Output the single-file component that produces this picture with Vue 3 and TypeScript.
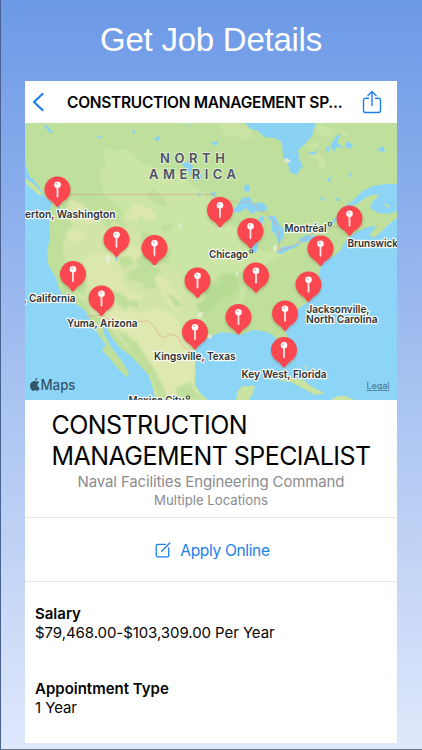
<script setup lang="ts">
interface Pin {
  x: number
  y: number
}

interface Label {
  text: string
  x: number
  y: number
  width: number
}

// map coordinates, same space as the viewBox
const pins: Pin[] = [
  { x: 57.5, y: 189.5 },
  { x: 116.5, y: 239.5 },
  { x: 154.5, y: 248 },
  { x: 250.5, y: 231 },
  { x: 220, y: 210 },
  { x: 349.5, y: 218.5 },
  { x: 320.5, y: 248.5 },
  { x: 73, y: 274 },
  { x: 101.5, y: 298.5 },
  { x: 197.5, y: 280.5 },
  { x: 256, y: 275.5 },
  { x: 308.5, y: 284.5 },
  { x: 285, y: 313.5 },
  { x: 238.5, y: 317 },
  { x: 195, y: 332 },
  { x: 284, y: 350 },
]

const labels: Label[] = [
  { text: 'erton, Washington', x: 25, y: 217.7, width: 90.5 },
  { text: ', California', x: 23.5, y: 302.2, width: 52 },
  { text: 'Yuma, Arizona', x: 67, y: 326.7, width: 70.5 },
  { text: 'Kingsville, Texas', x: 154, y: 359.7, width: 81.5 },
  { text: 'Chicago', x: 209, y: 257.8, width: 39 },
  { text: 'Montréal', x: 284.5, y: 231.8, width: 42 },
  { text: 'Brunswick', x: 347.5, y: 247.2, width: 50.5 },
  { text: 'Jacksonville,', x: 306.5, y: 313, width: 63 },
  { text: 'North Carolina', x: 306, y: 323.2, width: 71.5 },
  { text: 'Key West, Florida', x: 241.5, y: 378.2, width: 85 },
  { text: 'Mexico City', x: 128.5, y: 403.5, width: 56 },
]

const details = [
  { title: 'Salary', value: '$79,468.00-$103,309.00 Per Year' },
  { title: 'Appointment Type', value: '1 Year' },
]
</script>

<template>
  <main class="page">
    <h1 class="headline">Get Job Details</h1>

    <section class="screen">
      <header class="navbar">
        <svg class="back" viewBox="0 0 12 20">
          <path d="M10.5 2 L2 10 L10.5 18" />
        </svg>
        <span class="navbar-title">CONSTRUCTION MANAGEMENT SP...</span>
        <svg class="share" viewBox="0 0 20 24">
          <path d="M6.5 8.2H3.6Q1.5 8.2 1.5 10.3V20.4Q1.5 22.5 3.6 22.5H16.4Q18.5 22.5 18.5 20.4V10.3Q18.5 8.2 16.4 8.2H13.5" />
          <path d="M10 15.5V1.6M6 5.4L10 1.5L14 5.4" />
        </svg>
      </header>

      <svg class="map" viewBox="25 123 372 277" preserveAspectRatio="none">
        <defs>
          <filter id="soft" x="-10%" y="-10%" width="120%" height="120%">
            <feGaussianBlur stdDeviation="1" />
          </filter>
          <filter id="shade" x="-40%" y="-40%" width="180%" height="180%">
            <feGaussianBlur stdDeviation="1.5" />
          </filter>
          <clipPath id="land-clip">
            <path id="land" d="M25 123H397V184L385 184L373 186L363 191L355 198L348 207L357 204L366 197L375 194L379 196L372 202L370 208L378 213L388 214L397 211V218L388 225L380 233L373 238L369 235L377 226L368 227L359 231L350 236L345 242L341 250L334 256L325 260L321 266L319 275L314 283L315 291L307 303L300 307L292 314L287 323L286 333L290 342L294 355L292 363L286 358L282 347L277 339L270 333L263 331L253 330L247 332L240 335L232 333L222 332L213 335L203 341L197 346L195 355L196 375L195 384L200 393L208 400H156L152 385L148 374L140 366L132 357L121 349L112 338L105 325L102 323L104 334L111 347L121 360L129 373L127 377L118 369L111 360L102 350L106 345L98 334L91 321L85 310L76 304L67 301L59 289L56 278L48 264L47 252L50 238L49 215L52 203L44 196L39 187L31 181L25 163Z" />
          </clipPath>
        </defs>

        <rect x="25" y="123" width="372" height="277" fill="#8dd5f6" />
        <use href="#land" fill="#bfdf9c" />

        <g clip-path="url(#land-clip)">
          <!-- plains and prairie -->
          <g filter="url(#soft)">
            <path fill="#cbe5a5" d="M102 147L112 151L124 149L134 154L142 164L158 168L178 172L190 184L204 192L212 202L224 222L238 228L244 244L266 252L284 246L296 250L288 262L270 268L252 266L240 276L226 278L212 286L204 300L206 318L194 342L180 330L160 300L130 260L106 235L104 195L99 172L106 164Z" />
            <path fill="#c9e4a2" d="M218 124L238 123L250 129L254 136L244 141L236 135L224 137ZM317 123L336 129L330 137L316 135Z" />
            <path fill="#d0e5a6" d="M70 198L84 204L98 216L124 218L142 232L160 250L172 268L184 280L196 292L200 312L190 332L150 322L100 314L76 296L64 270L62 236L76 222L66 212Z" />
            <path fill="#dee8b0" d="M88 298L106 308L122 306L140 312L160 308L176 316L182 330L192 346L196 360L194 386L206 400H156L150 372L128 348L106 322L90 312Z" />
            <path fill="#dce7ad" d="M84 256L100 252L112 262L124 270L122 282L130 290L144 294L140 308L118 310L100 304L92 290L84 276ZM70 200L80 204L82 212L92 214L100 222L90 224L80 220L72 224L66 214ZM134 203L142 205L152 210L158 218L148 220L140 216L136 222L126 216ZM106 238L118 246L132 242L144 252L138 262L126 258L118 264L106 256ZM66 232L82 230L88 236L78 242L68 240ZM152 272L164 278L178 294L186 306L176 312L164 300Z" />
          </g>
          <!-- mountains and woodland -->
          <g filter="url(#soft)" fill="#bfdf9b">
            <path d="M86 204L104 194L114 204L124 212L120 218L130 228L122 226L114 220L108 228L100 218L90 214ZM50 205L62 204L68 214L66 232L60 252L66 264L76 272L86 286L84 296L74 288L62 274L48 258L46 230Z" />
            <path d="M140 232L150 232L158 242L172 252L168 264L158 262L160 272L154 278L156 288L148 290L142 282L130 280L126 272L140 268L136 260L146 252ZM112 290L122 294L128 300L140 302L138 308L128 306L126 312L118 304ZM118 258L130 256L134 264L122 268Z" />
            <path d="M116 330L126 334L136 342L140 348L152 366L162 384L168 398H158L150 374L140 364L130 350ZM132 340L138 342L137 352L133 350ZM176 388L190 382L196 392L206 400H178Z" />
            <path d="M212 282L224 272L238 274L248 266L262 266L276 258L296 248L304 246L300 330L246 336L216 336L202 340L206 322L200 316L208 304L206 292Z" />
            <path d="M166 292L176 298L184 306L176 308ZM160 226L170 222L174 228L164 232ZM152 188L164 198L168 206L156 204L146 196Z" />
            <path fill="#b6db93" d="M202 290L208 284L218 286L222 276L232 272L240 282L232 294L220 300L212 310L200 312L196 306L206 298Z" />
            <path fill="#cbe5a5" d="M240 286L247 284L244 300L238 306L232 304L240 296Z" />
          </g>
          <g filter="url(#soft)" fill="#cbe5a5">
            <path d="M312 151L323 156L326 167L317 168L320 160L311 158ZM300 147L319 142L316 149ZM337 128L349 133L345 137Z" />
          </g>
        </g>

        <!-- bays, lakes and rivers -->
        <g fill="#89d2f4">
          <path d="M245 123L251 129L258 131L264 137L275 138L282 142L283 157L288 164L290 172L297 175L300 169L303 167L299 158L298 150L304 145L312 136L316 123Z" />
          <path d="M232 211L239 203L242 198L250 197L254 204L262 202L268 208L264 212L257 211L252 214L246 208L238 213Z" />
          <path d="M252 253L251 240L254 229L260 217L265 216L259 232L258 246L256 253Z" />
          <path d="M267 216L275 216L279 224L284 230L283 238L278 244L276 235L272 231L272 222Z" />
          <path d="M276 253L282 247L295 245L299 242L300 245L291 249L281 254Z" />
          <path d="M298 240L306 235L316 236L313 240L301 243Z" />
          <path d="M190 161L194 169L198 175L198 181L192 178L187 169L181 164ZM198 167L201 175L202 181L199 178ZM210 143L218 141L217 146ZM154 138L160 136L158 142ZM245 184L250 186L249 192L244 191ZM210 194L216 191L215 197ZM197 192L201 195L199 197Z" />
          <path d="M94 137L101 136L101 138ZM47 125L53 133L50 133L44 126ZM132 129L136 132L133 134ZM186 127L193 123L188 127Z" />
          <path d="M307 153L318 151L314 155ZM330 146L336 136L341 134L337 142L343 148L336 147L335 152ZM325 149L329 146L329 153ZM347 141L353 145L350 149L345 146ZM376 151L383 146L385 152L379 151ZM348 171L352 175L351 178ZM326 181L333 175L329 182ZM320 197L325 198L322 201ZM335 197L341 200L337 201Z" />
          <path d="M25 174L32 178L39 187L35 186L26 179ZM57 204L60 207L60 214L57 210Z" />
          <path d="M348 207L329 228L327 227L351 200ZM115 254L118 259L116 262Z" />
        </g>

        <!-- islands -->
        <g fill="#c7e2a1">
          <path d="M25 178L34 184L43 195L39 195L27 185ZM383 203L390 206L388 208Z" />
          <path d="M236 400L238 390L243 386L255 386L253 393L249 400Z" />
          <path d="M278 381L291 377L303 380L314 388L325 393L315 395L302 388L291 382ZM331 400L337 396L346 396L354 400ZM304 365L307 367L306 370Z" />
        </g>
        <g fill="#e4eccf">
          <path d="M283 160L287 158L291 161L287 163ZM198 313L203 312L202 317L197 318ZM207 334L212 335L211 339L206 337Z" />
          <ellipse cx="108" cy="259" rx="2.5" ry="4" />
          <ellipse cx="180.5" cy="226" rx="1.2" ry="3" />
          <ellipse cx="220" cy="228" rx="2.5" ry="1.7" />
          <ellipse cx="155" cy="266" rx="2.5" ry="1.5" />
          <ellipse cx="237" cy="274" rx="1.6" ry="1.6" />
          <ellipse cx="275" cy="248" rx="1.8" ry="3" />
        </g>

        <path class="border" d="M55 194.5H211L222 199L233 201L240 203L249 201L261 210L270 216L277 226L280 241L278 251L290 247L303 240L316 231L326 227L345 227L359 222L366 229M84 317L101 315L114 322H132L148 321L154 326L159 335L165 338L170 334L177 336L183 347L193 352" />

        <text class="continent" x="160" y="162.5" textLength="65">NORTH</text>
        <text class="continent" x="149" y="179.2" textLength="87">AMERICA</text>

        <g v-for="(pin, i) in pins" :key="i" :transform="`translate(${pin.x} ${pin.y})`">
          <path class="pin-shadow" filter="url(#shade)" d="M0 18L-9 11A13 13 0 1 1 9 11Z" />
          <path class="pin-body" d="M0 17.5Q-1.2 17.2 -2 15.7Q-3.2 13.6 -5.8 11.7A13 13 0 1 1 5.8 11.7Q3.2 13.6 2 15.7Q1.2 17.2 0 17.5Z" />
          <path class="pin-needle" d="M-.9 -2.5H.9V6.8L0 8.7L-.9 6.8Z" />
          <circle class="pin-head" cx="0" cy="-4.8" r="3.3" />
          <circle class="pin-glint" cx="-.9" cy="-5.7" r="1" />
        </g>

        <text
          v-for="label in labels"
          :key="label.text"
          class="place"
          :x="label.x"
          :y="label.y"
          :textLength="label.width"
          lengthAdjust="spacingAndGlyphs"
        >{{ label.text }}</text>

        <circle class="city" cx="251.3" cy="251.5" r="1.5" />
        <circle class="city" cx="329.8" cy="224" r="1.5" />
        <circle class="city" cx="188" cy="397.5" r="1.5" />

        <g class="brand">
          <path d="M36.7 381.5Q36 380.9 34.9 380.9C32.5 380.9 30 382.8 30 385.8C30 388.2 31.7 390.9 33.2 390.9C34.1 390.9 34.2 390.3 35.2 390.3C36.2 390.3 36.4 390.9 37.3 390.9C38.5 390.9 39.3 389.1 39.7 388C38.3 387.3 37.6 386.3 37.6 385C37.6 383.8 38.3 382.8 39.2 382.3C38.5 381.4 37.5 381 36.7 381.5ZM35.2 380.6C35 379.2 36.1 378 37.3 377.8C37.5 379.2 36.5 380.5 35.2 380.6Z" />
          <text x="40.5" y="390" textLength="35" lengthAdjust="spacingAndGlyphs">Maps</text>
        </g>
        <text class="legal" x="366.5" y="389" textLength="23">Legal</text>
      </svg>

      <div class="job">
        <h2>CONSTRUCTION<br />MANAGEMENT SPECIALIST</h2>
        <p class="agency">Naval Facilities Engineering Command</p>
        <p class="location">Multiple Locations</p>
      </div>

      <div class="apply">
        <svg viewBox="0 0 16 16">
          <path d="M10.5 2.3H2.6Q1.2 2.3 1.2 3.7V13.4Q1.2 14.8 2.6 14.8H12.3Q13.7 14.8 13.7 13.4V5.8" />
          <path d="M6.6 9.2L14.8 1" />
        </svg>
        <span>Apply Online</span>
      </div>

      <dl class="details">
        <div v-for="item in details" :key="item.title" class="detail">
          <dt>{{ item.title }}</dt>
          <dd>{{ item.value }}</dd>
        </div>
      </dl>
    </section>
  </main>
</template>

<style>
body {
  margin: 0;
}
</style>

<style scoped>
.page {
  display: flex;
  flex-direction: column;
  align-items: center;
  box-sizing: border-box;
  width: 422px;
  height: 750px;
  padding: 0 1px 6px 0;
  border-left: 1px solid #47628f;
  border-bottom: 1px solid #6d7485;
  background: linear-gradient(#6c99e6, #dfe8fb);
  font-family: Inter, "Liberation Sans", sans-serif;
  overflow: hidden;
}

.headline {
  flex: none;
  height: 81px;
  margin: 0;
  font: 400 33px/79px "Liberation Sans", Arial, sans-serif;
  letter-spacing: -0.25px;
  color: #fff;
}

.screen {
  flex: 1;
  display: flex;
  flex-direction: column;
  width: 372px;
  background: #fff;
  color: #050505;
}

.navbar {
  display: flex;
  align-items: center;
  box-sizing: border-box;
  height: 42px;
  padding: 0 15px 0 7px;
}

.navbar svg,
.apply svg {
  flex: none;
  fill: none;
  stroke: #1c80ee;
  stroke-linecap: round;
  stroke-linejoin: round;
}

.back {
  width: 12px;
  height: 20px;
  stroke-width: 2.3;
}

.share {
  width: 20px;
  height: 24px;
  stroke-width: 1.4;
}

.navbar-title {
  flex: 1;
  padding-left: 23px;
  font-size: 15.5px;
  font-weight: 600;
  letter-spacing: -0.28px;
  white-space: nowrap;
}

.map {
  flex: none;
  display: block;
  width: 372px;
  height: 277px;
}

.border {
  fill: none;
  stroke: #d9a184;
  stroke-width: 0.8;
  opacity: 0.75;
}

.place,
.continent {
  font-size: 11px;
  font-weight: 600;
  fill: #303437;
  stroke: #f8faf2;
  stroke-width: 2.4px;
  stroke-linejoin: round;
  paint-order: stroke;
}

.continent {
  font-size: 13px;
  fill: #4c5268;
  stroke: #e2efcd;
  stroke-width: 1.8px;
}

.pin-shadow {
  fill: #5b4a35;
  opacity: 0.3;
}

.pin-body {
  fill: #fb474f;
}

.pin-needle {
  fill: #ffe9e8;
}

.pin-head {
  fill: #fff;
}

.pin-glint {
  fill: #f7a5a7;
}

.city {
  fill: #fff;
  stroke: #333b3e;
  stroke-width: 1.1;
}

.brand {
  fill: #33566a;
  font-size: 14px;
  font-weight: 500;
}

.legal {
  fill: #4d7d96;
  font-size: 9px;
  font-weight: 500;
  text-decoration: underline;
}

.job {
  display: flex;
  flex-direction: column;
  align-items: center;
  box-sizing: border-box;
  height: 118px;
  padding-top: 10px;
  border-bottom: 1px solid #e6e6e8;
}

.job h2 {
  margin: 0;
  font-size: 25px;
  font-weight: 400;
  line-height: 31px;
  letter-spacing: -0.55px;
  white-space: nowrap;
}

.job p {
  margin: 0;
  color: #8b8b8e;
}

.agency {
  font-size: 15px;
  line-height: 20px;
  letter-spacing: -0.13px;
}

.location {
  font-size: 13.2px;
  line-height: 16px;
}

.apply {
  display: flex;
  align-items: center;
  justify-content: center;
  gap: 9px;
  box-sizing: border-box;
  height: 64px;
  padding-left: 3px;
  border-bottom: 1px solid #e6e6e8;
  font-size: 15.5px;
  letter-spacing: -0.33px;
  color: #1c80ee;
}

.apply span {
  padding-top: 1px;
}

.apply svg {
  width: 16px;
  height: 16px;
  stroke-width: 1.3;
}

.details {
  display: flex;
  flex-direction: column;
  gap: 37px;
  margin: 0;
  padding: 22px 10px 0;
  font-size: 15px;
  line-height: 19px;
}

.detail dt {
  font-weight: 600;
}

.detail dd {
  margin: 0;
  letter-spacing: -0.07px;
}
</style>
